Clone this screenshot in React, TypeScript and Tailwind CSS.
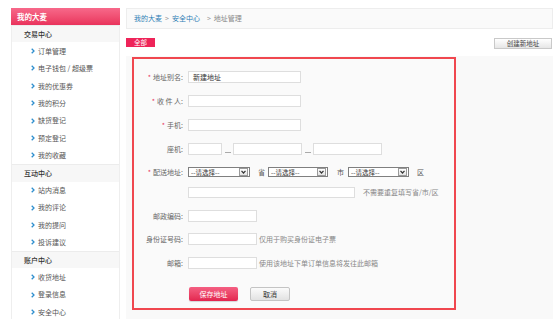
import React from "react";

// Sidebar menu data
const menu = [
  {
    title: "交易中心",
    items: ["订单管理", "电子钱包 / 超级票", "我的优惠券", "我的积分", "缺货登记", "预定登记", "我的收藏"],
  },
  { title: "互动中心", items: ["站内消息", "我的评论", "我的提问", "投诉建议"] },
  { title: "账户中心", items: ["收货地址", "登录信息", "安全中心"] },
];

function Arrow() {
  return (
    <svg width="4" height="6" viewBox="0 0 4 6" className="shrink-0">
      <polyline points="0.7,0.7 3,3 0.7,5.3" fill="none" stroke="#2f8fce" strokeWidth="1.3" />
    </svg>
  );
}

function Sidebar() {
  return (
    <div className="w-[109px] shrink-0 mt-[8px] ml-[11px]">
      <div className="h-[17px] bg-gradient-to-b from-[#f7688a] to-[#e9325c] flex items-center pl-[6px] text-white font-bold text-[7.5px]">
        我的大麦
      </div>
      <div className="border-l border-r border-[#eeeeee] bg-white">
        {menu.map((section) => (
          <div key={section.title}>
            <div className="h-[17.4px] flex items-center pl-[12px] bg-[#f7f7f7] border-t border-[#ececec] text-[#333] text-[7px] font-medium">
              {section.title}
            </div>
            {section.items.map((item) => (
              <div key={item} className="h-[17.4px] flex items-center pl-[19px] gap-[3px] text-[#555] text-[7px]">
                <Arrow />
                <span>{item}</span>
              </div>
            ))}
          </div>
        ))}
      </div>
    </div>
  );
}

function Label({ text, req, className = "" }: { text: string; req?: boolean; className?: string }) {
  return (
    <div className={`w-[49px] shrink-0 text-right text-[#666] text-[7px] whitespace-nowrap mr-[5px] ${className}`}>
      {req && <span className="text-[#e8325c] mr-[2px]">*</span>}
      {text}:
    </div>
  );
}

function Input({ w, value, h = "h-[12px]" }: { w: string; value?: string; h?: string }) {
  return (
    <div className={`${w} ${h} bg-white border border-[#dedede] flex items-center pl-[4px] text-[7px] text-[#333] shrink-0`}>
      {value}
    </div>
  );
}

function Select({ w }: { w: string }) {
  return (
    <div className={`${w} h-[10px] bg-white border border-[#7f7f7f] flex items-center shrink-0`}>
      <span className="flex-1 pl-[2px] text-[6.5px] text-[#333] leading-none">--请选择--</span>
      <div className="w-[9px] h-[8px] mr-[1px] border border-[#9a9a9a] bg-gradient-to-b from-white to-[#e4e4e4] flex items-center justify-center">
        <svg width="5" height="4" viewBox="0 0 5 4">
          <polyline points="0.5,0.8 2.5,3 4.5,0.8" fill="none" stroke="#333" strokeWidth="1.2" />
        </svg>
      </div>
    </div>
  );
}

function Dash() {
  return (
    <div className="w-[11px] h-full flex items-end justify-center pb-[2px] shrink-0">
      <div className="w-[6px] h-px bg-[#aaa]" />
    </div>
  );
}

function Hint({ text, className = "" }: { text: string; className?: string }) {
  return <span className={`text-[7px] text-[#888] whitespace-nowrap ${className}`}>{text}</span>;
}

function AddressForm() {
  return (
    <div className="w-[324px] h-[253px] border-2 border-[#f0474f] bg-[#fafafa] pt-[12px]">
      <div className="flex items-center h-[12px]">
        <Label text="地址别名" req />
        <Input w="w-[113px]" value="新建地址" />
      </div>
      <div className="flex items-center h-[12px] mt-[12px]">
        <Label text="收 件 人" req />
        <Input w="w-[113px]" />
      </div>
      <div className="flex items-center h-[12px] mt-[12px]">
        <Label text="手机" req />
        <Input w="w-[113px]" />
      </div>
      <div className="flex items-center h-[12px] mt-[12px]">
        <Label text="座机" />
        <Input w="w-[34px]" />
        <Dash />
        <Input w="w-[69px]" />
        <Dash />
        <Input w="w-[69px]" />
      </div>
      <div className="flex items-center h-[10px] mt-[12px] text-[7px] text-[#555]">
        <Label text="配送地址" req />
        <Select w="w-[62px]" />
        <span className="ml-[8px] mr-[3px]">省</span>
        <Select w="w-[60px]" />
        <span className="ml-[9px] mr-[4px]">市</span>
        <Select w="w-[61px]" />
        <span className="ml-[8px]">区</span>
      </div>
      <div className="flex items-center h-[11px] mt-[10px]">
        <div className="w-[54px] shrink-0" />
        <Input w="w-[167px]" h="h-[11px]" />
        <Hint text="不需要重复填写省/市/区" className="ml-[8px]" />
      </div>
      <div className="flex items-center h-[12px] mt-[12px]">
        <Label text="邮政编码" />
        <Input w="w-[69px]" />
      </div>
      <div className="flex items-center h-[12px] mt-[11px]">
        <Label text="身份证号码" />
        <Input w="w-[69px]" />
        <Hint text="仅用于购买身份证电子票" className="ml-[2px]" />
      </div>
      <div className="flex items-center h-[12px] mt-[12px]">
        <Label text="邮箱" />
        <Input w="w-[69px]" />
        <Hint text="使用该地址下单订单信息将发往此邮箱" className="ml-[2px]" />
      </div>
      <div className="flex items-center mt-[18px] pl-[55px]">
        <button className="w-[49px] h-[14px] rounded-[2px] bg-gradient-to-b from-[#f45e82] to-[#e3234f] text-white text-[7px] shadow-[0_1px_1px_rgba(0,0,0,0.15)]">
          保存地址
        </button>
        <button className="w-[40px] h-[14px] ml-[12px] rounded-[2px] border border-[#c4c4c4] bg-gradient-to-b from-[#fbfbfb] to-[#e2e2e2] text-[#333] text-[7px]">
          取消
        </button>
      </div>
    </div>
  );
}

export default function App() {
  return (
    <div className="w-[555px] h-[319px] bg-white overflow-hidden flex font-['Noto_Sans_CJK_SC',sans-serif]">
      <Sidebar />
      <div className="w-[427px] ml-[6px] flex flex-col">
        {/* Breadcrumb */}
        <div className="mt-[8px] h-[21px] border border-[#ededed] bg-[#fafafa] flex items-center pl-[7px] text-[7px] gap-[3px]">
          <span className="text-[#2f7fb5]">我的大麦</span>
          <span className="text-[#999]">&gt;</span>
          <span className="text-[#2f7fb5]">安全中心</span>
          <span className="text-[#999] ml-[4px]">&gt;</span>
          <span className="text-[#888]">地址管理</span>
        </div>

        {/* Tabs row */}
        <div className="flex items-start justify-between mt-[9px] h-[18px]">
          <div className="w-[29px] h-[9px] bg-[#ee2459] text-white text-[6.5px] flex items-center justify-center leading-none">
            全部
          </div>
          <button className="w-[58px] h-[11px] mr-[1px] border border-[#c9c9c9] bg-gradient-to-b from-white to-[#e6e6e6] text-[#444] text-[6.5px] flex items-center justify-center leading-none">
            创建新地址
          </button>
        </div>

        {/* Content panel */}
        <div className="flex-1 bg-[#f9f9f9] pl-[6px] pt-[1px]">
          <AddressForm />
        </div>
      </div>
    </div>
  );
}
